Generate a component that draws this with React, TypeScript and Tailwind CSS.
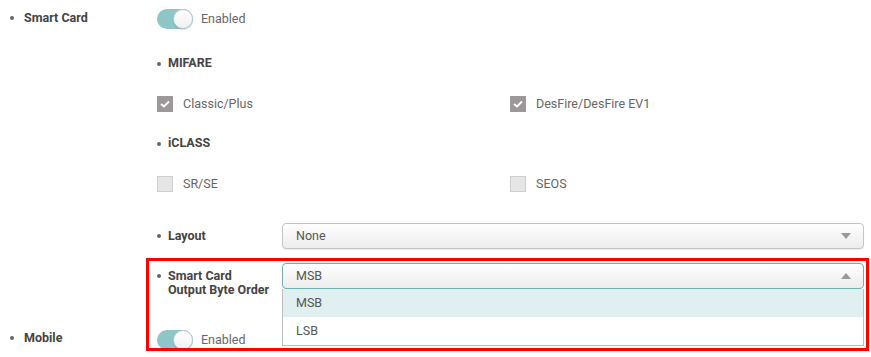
import React from "react";

function Toggle() {
  return (
    <div className="relative w-[36px] h-[20px] rounded-full bg-[#8ec5c6] shrink-0">
      <div className="absolute right-0 top-0 w-[20px] h-[20px] rounded-full bg-gradient-to-b from-white to-[#f0f0f0] border border-[#b9c9ca] shadow-[0_1px_1px_rgba(0,0,0,0.15)]" />
    </div>
  );
}

function Check({ checked }: { checked: boolean }) {
  return checked ? (
    <div className="w-[16px] h-[16px] bg-[#9c9899] flex items-center justify-center shrink-0">
      <svg width="10" height="8" viewBox="0 0 10 8">
        <path d="M1 4 L4 6.5 L9 1.5" stroke="white" strokeWidth="1.8" fill="none" />
      </svg>
    </div>
  ) : (
    <div className="w-[16px] h-[16px] bg-[#e6e6e6] border border-[#cfcfcf] shrink-0" />
  );
}

function Bullet({ gap }: { gap: string }) {
  return <span className={`inline-block w-[4px] h-[4px] rounded-full bg-[#666] shrink-0 ${gap}`} />;
}

export default function App() {
  return (
    <div
      className="relative w-[871px] h-[357px] bg-white overflow-hidden text-[12.5px] text-[#555]"
      style={{ fontFamily: "Roboto, 'Liberation Sans', sans-serif" }}
    >
      {/* Smart Card row */}
      <div className="flex pt-[9px]">
        <div className="w-[157px] pl-[10px] h-[20px] flex items-center font-bold text-[#444]">
          <div className="flex items-center -mt-[2px]">
            <Bullet gap="mr-[10px]" />
            <span>Smart Card</span>
          </div>
        </div>
        <div className="flex flex-col">
          <div className="flex items-center h-[20px]">
            <Toggle />
            <span className="ml-[8px] text-[#666] mt-[1px]">Enabled</span>
          </div>
          <div className="mt-[25px] h-[20px] flex items-center font-bold text-[#444]">
            <div className="flex items-center -mt-[1px]">
              <Bullet gap="mr-[7px]" />
              <span>MIFARE</span>
            </div>
          </div>
          <div className="mt-[20px] h-[20px] flex items-center">
            <div className="w-[353px] flex items-center">
              <Check checked />
              <span className="ml-[10px] text-[#666]">Classic/Plus</span>
            </div>
            <div className="flex items-center">
              <Check checked />
              <span className="ml-[10px] text-[#666]">DesFire/DesFire EV1</span>
            </div>
          </div>
          <div className="mt-[20px] h-[20px] flex items-center font-bold text-[#444]">
            <div className="flex items-center -mt-[1px]">
              <Bullet gap="mr-[7px]" />
              <span>iCLASS</span>
            </div>
          </div>
          <div className="mt-[20px] h-[20px] flex items-center">
            <div className="w-[353px] flex items-center">
              <Check checked={false} />
              <span className="ml-[10px] text-[#666]">SR/SE</span>
            </div>
            <div className="flex items-center">
              <Check checked={false} />
              <span className="ml-[10px] text-[#666]">SEOS</span>
            </div>
          </div>
          {/* Layout */}
          <div className="mt-[29px] flex items-start">
            <div className="w-[125px] h-[26px] flex items-center font-bold text-[#444]">
              <Bullet gap="mr-[7px]" />
              <span>Layout</span>
            </div>
            <div className="w-[582px] h-[26px] rounded-[4px] border border-[#c4c4c4] bg-gradient-to-b from-white to-[#ececec] flex items-center justify-between pl-[13px] pr-[12px] shadow-[0_1px_1px_rgba(0,0,0,0.08)]">
              <span className="text-[#555]">None</span>
              <svg width="10" height="6" viewBox="0 0 10 6">
                <path d="M0 0 L10 0 L5 6 Z" fill="#999" />
              </svg>
            </div>
          </div>
          {/* Output byte order */}
          <div className="mt-[14px] flex items-start h-[26px]">
            <div className="w-[125px] h-[26px] flex items-start font-bold text-[#444] pt-[6px]">
              <div className="h-[14px] flex items-center">
                <Bullet gap="mr-[7px]" />
              </div>
              <span className="leading-[14px]">Smart Card<br />Output Byte Order</span>
            </div>
            <div className="relative w-[582px] h-[26px]">
              <div className="w-full h-[26px] rounded-[4px] border border-[#6fb0b0] bg-gradient-to-b from-white to-[#ececec] flex items-center justify-between pl-[13px] pr-[12px]">
                <span className="text-[#555]">MSB</span>
                <svg width="10" height="6" viewBox="0 0 10 6">
                  <path d="M0 6 L10 6 L5 0 Z" fill="#999" />
                </svg>
              </div>
              <div className="absolute left-0 top-[26px] w-full border border-t-0 border-[#bdbdbd] bg-white z-10">
                <div className="h-[28px] bg-[#e0eff0] flex items-center pl-[13px] text-[#555]">MSB</div>
                <div className="h-[28px] flex items-center pl-[13px] text-[#555]">LSB</div>
              </div>
            </div>
          </div>
        </div>
      </div>
      {/* Mobile row */}
      <div className="flex mt-[41px]">
        <div className="w-[157px] pl-[10px] h-[20px] flex items-center font-bold text-[#444]">
          <div className="flex items-center -mt-[4px]">
            <Bullet gap="mr-[10px]" />
            <span>Mobile</span>
          </div>
        </div>
        <div className="flex items-center h-[20px]">
          <Toggle />
          <span className="ml-[8px] text-[#666] mt-[1px]">Enabled</span>
        </div>
      </div>
      {/* red annotation box */}
      <div className="absolute left-[146px] top-[258px] w-[723px] h-[93px] border-[3px] border-[#ff0000] z-20 pointer-events-none" />
    </div>
  );
}
